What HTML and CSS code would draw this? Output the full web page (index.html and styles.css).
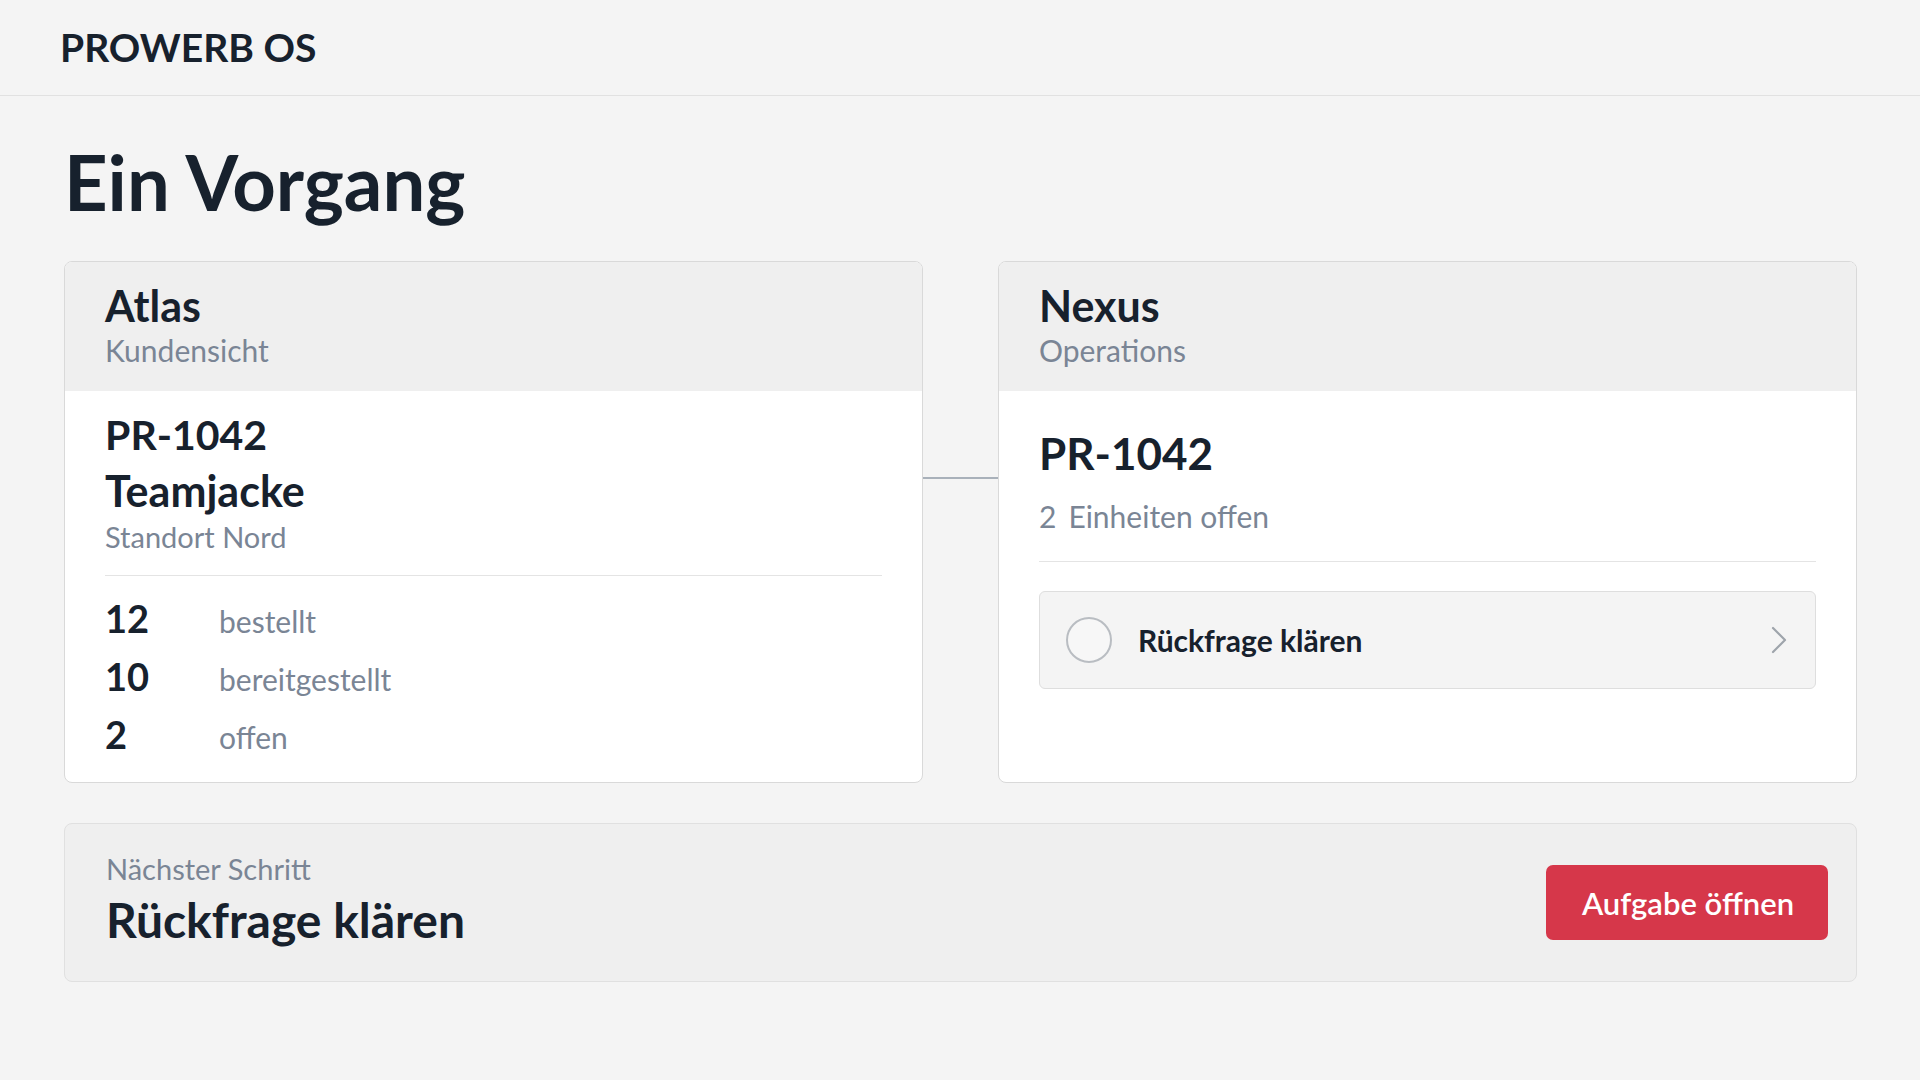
FILE: index.html
```html
<!DOCTYPE html>
<html lang="de">
<head>
<meta charset="utf-8">
<title>PROWERB OS – Ein Vorgang</title>
<link rel="stylesheet" href="styles.css">
</head>
<body>
<header class="topbar">
  <div class="brand">PROWERB OS</div>
</header>
<main class="main">
  <h1 class="page-title">Ein Vorgang</h1>
  <section class="systems">
    <article class="card">
      <div class="card-head">
        <div class="card-title">Atlas</div>
        <div class="card-sub">Kundensicht</div>
      </div>
      <div class="card-body card-body-left">
        <div class="order-id">PR-1042</div>
        <div class="order-name">Teamjacke</div>
        <div class="order-loc">Standort Nord</div>
        <div class="divider divider-left"></div>
        <div class="stats">
          <div class="stat"><span class="stat-num">12</span><span class="stat-label">bestellt</span></div>
          <div class="stat"><span class="stat-num">10</span><span class="stat-label">bereitgestellt</span></div>
          <div class="stat"><span class="stat-num">2</span><span class="stat-label">offen</span></div>
        </div>
      </div>
    </article>
    <div class="connector"></div>
    <article class="card">
      <div class="card-head">
        <div class="card-title">Nexus</div>
        <div class="card-sub">Operations</div>
      </div>
      <div class="card-body card-body-right">
        <div class="order-id-lg">PR-1042</div>
        <div class="open-units"><span class="open-count">2</span>Einheiten offen</div>
        <div class="divider divider-right"></div>
        <div class="task">
          <span class="task-check"></span>
          <span class="task-label">Rückfrage klären</span>
          <svg class="task-chevron" width="18" height="28" viewBox="0 0 18 28" aria-hidden="true">
            <polyline points="3,2 15,14 3,26" fill="none" stroke="#9ea4ab" stroke-width="2.2" stroke-linecap="round" stroke-linejoin="round"/>
          </svg>
        </div>
      </div>
    </article>
  </section>
  <section class="next-step">
    <div class="next-text">
      <div class="next-label">Nächster Schritt</div>
      <div class="next-title">Rückfrage klären</div>
    </div>
    <button class="btn-primary" type="button">Aufgabe öffnen</button>
  </section>
</main>
</body>
</html>
```

FILE: styles.css
```css
* {
  box-sizing: border-box;
}

html, body {
  margin: 0;
  padding: 0;
}

body {
  width: 1920px;
  min-height: 1080px;
  background: #f4f4f4;
  font-family: Lato, "Noto Sans", "Liberation Sans", sans-serif;
  color: #16202c;
}

.topbar {
  height: 96px;
  display: flex;
  align-items: center;
  padding-left: 60px;
  border-bottom: 1px solid #e1e1e1;
  background: #f4f4f4;
}

.brand {
  font-size: 39px;
  font-weight: 700;
  line-height: 1;
  color: #17212d;
}

.main {
  padding: 0 63px 0 64px;
}

.page-title {
  margin: 40px 0 0 0;
  font-size: 76px;
  line-height: 91px;
  font-weight: 700;
  color: #17212d;
}

.systems {
  margin-top: 34px;
  display: grid;
  grid-template-columns: 1fr 75px 1fr;
  align-items: start;
}

.card {
  height: 522px;
  background: #ffffff;
  border: 1px solid #d9d9d9;
  border-radius: 8px;
  overflow: hidden;
}

.card-head {
  background: #efefef;
  padding: 18px 40px 23px 40px;
}

.card-title {
  font-size: 43px;
  line-height: 52px;
  font-weight: 700;
  color: #17212d;
}

.card-sub {
  font-size: 30px;
  line-height: 36px;
  color: #7a8595;
}

.card-body {
  padding: 0 40px;
}

.card-body-left {
  padding-top: 16px;
}

.order-id {
  font-size: 41px;
  line-height: 56px;
  font-weight: 700;
  color: #17212d;
}

.order-name {
  font-size: 43px;
  line-height: 56px;
  font-weight: 700;
  color: #17212d;
}

.order-loc {
  font-size: 29px;
  line-height: 36px;
  color: #7a8595;
}

.divider {
  height: 1px;
  background: #e4e4e4;
}

.divider-left {
  margin-top: 20px;
}

.stats {
  margin-top: 13px;
}

.stat {
  display: flex;
  align-items: baseline;
  height: 58px;
  line-height: 58px;
}

.stat-num {
  width: 114px;
  font-size: 38px;
  font-weight: 700;
  color: #17212d;
}

.stat-label {
  font-size: 30px;
  color: #7a8595;
}

.connector {
  margin-top: 216px;
  height: 2px;
  background: #a9b1ba;
}

.card-body-right {
  padding-top: 36px;
}

.order-id-lg {
  font-size: 44px;
  line-height: 53px;
  font-weight: 700;
  color: #17212d;
}

.open-units {
  margin-top: 18px;
  font-size: 30px;
  line-height: 36px;
  color: #7a8595;
}

.open-count {
  margin-right: 12px;
}

.divider-right {
  margin-top: 27px;
}

.task {
  margin-top: 29px;
  height: 98px;
  display: flex;
  align-items: center;
  padding: 0 27px 0 26px;
  background: #f4f4f4;
  border: 1px solid #dedede;
  border-radius: 6px;
}

.task-check {
  width: 46px;
  height: 46px;
  border: 2px solid #b9bdc2;
  border-radius: 50%;
  background: #f7f7f7;
  flex: none;
}

.task-label {
  margin-left: 26px;
  flex: 1;
  font-size: 30px;
  font-weight: 700;
  color: #17212d;
}

.task-chevron {
  flex: none;
}

.next-step {
  margin-top: 40px;
  height: 159px;
  display: flex;
  align-items: center;
  justify-content: space-between;
  padding: 0 28px 6px 41px;
  background: #efefef;
  border: 1px solid #e0e0e0;
  border-radius: 8px;
}

.next-label {
  font-size: 29px;
  line-height: 36px;
  color: #7a8595;
}

.next-title {
  margin-top: 4px;
  font-size: 48px;
  line-height: 58px;
  font-weight: 700;
  color: #17212d;
}

.btn-primary {
  width: 282px;
  height: 75px;
  margin-top: 6px;
  padding-left: 8px;
  border: none;
  border-radius: 7px;
  background: #d6374a;
  color: #ffffff;
  font-family: Lato, "Noto Sans", "Liberation Sans", sans-serif;
  font-size: 31px;
  font-weight: 600;
  cursor: pointer;
}
```
